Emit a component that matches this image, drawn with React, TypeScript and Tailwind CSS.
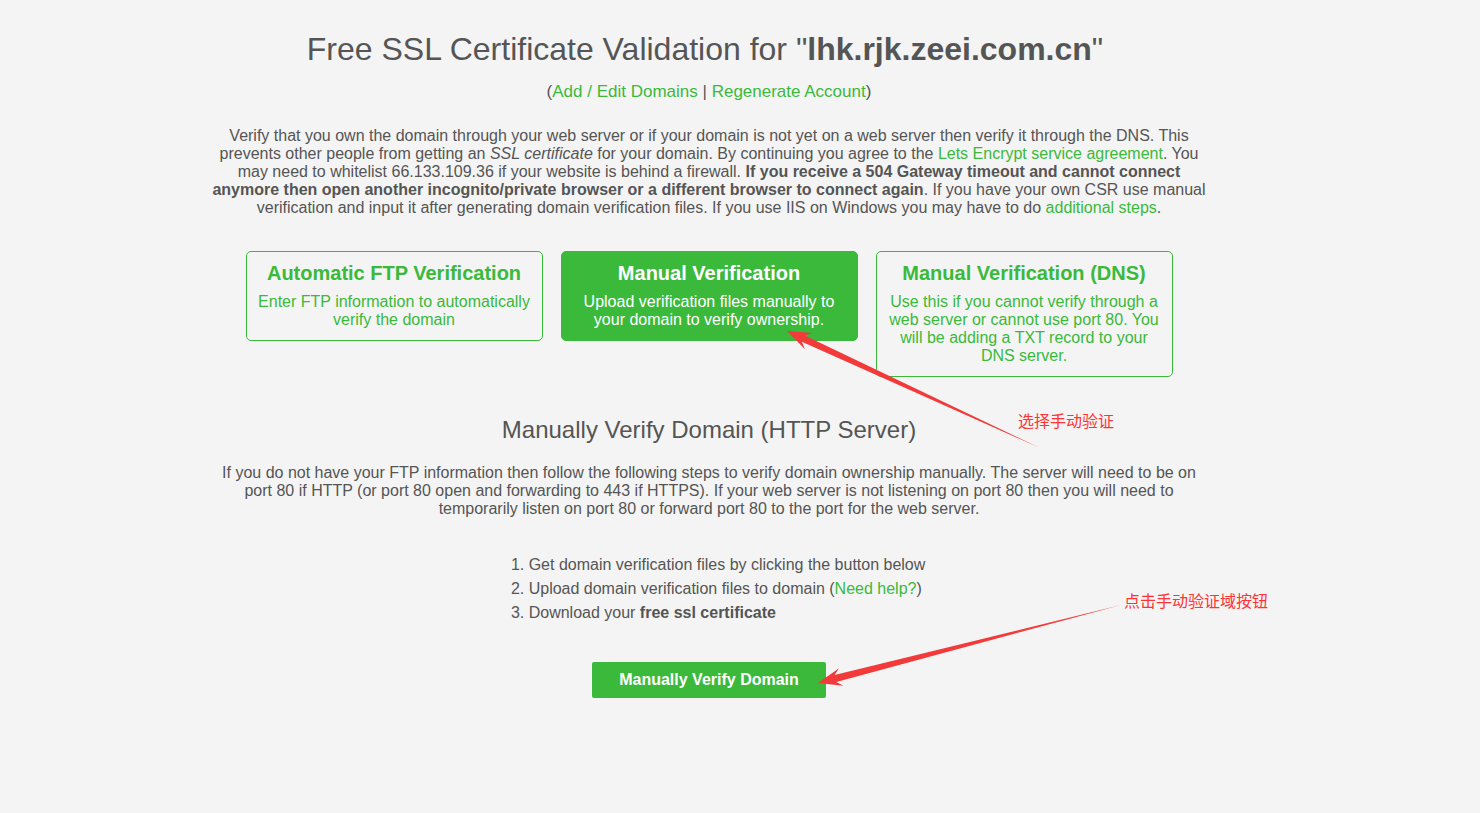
import React from 'react';

const GREEN = 'text-[#3bb93b]';

function Arrow({ tail, head, color = '#f23a3a' }: { tail: [number, number]; head: [number, number]; color?: string }) {
  const dx = head[0] - tail[0];
  const dy = head[1] - tail[1];
  const len = Math.hypot(dx, dy);
  const ux = dx / len;
  const uy = dy / len;
  const nx = -uy;
  const ny = ux;
  const headLen = 24;
  const headHalf = 9;
  const neckHalf = 3.5;
  const bx = head[0] - ux * headLen;
  const by = head[1] - uy * headLen;
  const nkx = head[0] - ux * (headLen - 6);
  const nky = head[1] - uy * (headLen - 6);
  const pts: [number, number][] = [
    [tail[0], tail[1]],
    [nkx + nx * neckHalf, nky + ny * neckHalf],
    [bx + nx * headHalf, by + ny * headHalf],
    [head[0], head[1]],
    [bx - nx * headHalf, by - ny * headHalf],
    [nkx - nx * neckHalf, nky - ny * neckHalf],
  ];
  return <polygon points={pts.map((p) => p.join(',')).join(' ')} fill={color} />;
}

export default function App() {
  return (
    <main className="relative min-h-[813px] bg-[#f4f4f4] font-['Liberation_Sans',Arial,sans-serif] text-[#555]">
      <div className="ml-[209px] w-[1000px] pt-[30px] text-center">
        <h1 className="pr-[8px] text-[32px] leading-[38px]">
          Free SSL Certificate Validation for "<b>lhk.rjk.zeei.com.cn</b>"
        </h1>
        <p className="mt-[14px] text-[17px] leading-[19px]">
          (<a className={GREEN}>Add / Edit Domains</a> | <a className={GREEN}>Regenerate Account</a>)
        </p>

        <p className="mt-[26px] text-[16px] leading-[18px]">
          Verify that you own the domain through your web server or if your domain is not yet on a web server then verify
          it through the DNS. This prevents other people from getting an <i>SSL certificate</i> for your domain. By
          continuing you agree to the <a className={GREEN}>Lets Encrypt service agreement</a>. You may need to whitelist
          66.133.109.36 if your website is behind a firewall.{' '}
          <b>If you receive a 504 Gateway timeout and cannot connect anymore then open another incognito/private browser or a different browser to connect again</b>.
          If you have your own CSR use manual verification and input it after generating domain verification files. If
          you use IIS on Windows you may have to do <a className={GREEN}>additional steps</a>.
        </p>

        <div className="mt-[34px] flex items-start justify-center gap-[18px]">
          <div className="w-[297px] rounded-[5px] border border-[#3bb93b] px-[10px] pt-[9px] pb-[11px] text-[#3bb93b]">
            <h3 className="text-[20px] font-bold leading-[24px]">Automatic FTP Verification</h3>
            <p className="mt-[8px] text-[16px] leading-[18px]">Enter FTP information to automatically verify the domain</p>
          </div>
          <div className="w-[297px] rounded-[5px] border border-[#3bb93b] bg-[#3bb93b] px-[10px] pt-[9px] pb-[11px] text-white">
            <h3 className="text-[20px] font-bold leading-[24px]">Manual Verification</h3>
            <p className="mt-[8px] text-[16px] leading-[18px]">Upload verification files manually to your domain to verify ownership.</p>
          </div>
          <div className="w-[297px] rounded-[5px] border border-[#3bb93b] px-[10px] pt-[9px] pb-[11px] text-[#3bb93b]">
            <h3 className="text-[20px] font-bold leading-[24px]">Manual Verification (DNS)</h3>
            <p className="mt-[8px] text-[16px] leading-[18px]">
              Use this if you cannot verify through a web server or cannot use port 80. You will be adding a TXT record to
              your DNS server.
            </p>
          </div>
        </div>

        <h2 className="mt-[39px] text-[24px] leading-[28px]">Manually Verify Domain (HTTP Server)</h2>

        <p className="mt-[20px] text-[16px] leading-[18px]">
          If you do not have your FTP information then follow the following steps to verify domain ownership manually.
          The server will need to be on port 80 if HTTP (or port 80 open and forwarding to 443 if HTTPS). If your web
          server is not listening on port 80 then you will need to temporarily listen on port 80 or forward port 80 to
          the port for the web server.
        </p>

        <ol className="mt-[35px] inline-block list-decimal pl-[36px] text-left text-[16px] leading-[24px]">
          <li>Get domain verification files by clicking the button below</li>
          <li>
            Upload domain verification files to domain (<a className={GREEN}>Need help?</a>)
          </li>
          <li>
            Download your <b>free ssl certificate</b>
          </li>
        </ol>

        <div className="mt-[37px]">
          <button className="h-[36px] w-[234px] rounded-[2px] bg-[#3bb93b] text-[16px] font-bold text-white">
            Manually Verify Domain
          </button>
        </div>
      </div>

      <svg className="pointer-events-none absolute left-0 top-0" width="1480" height="813">
        <Arrow tail={[1040, 448]} head={[787, 331]} />
        <Arrow tail={[1121, 605]} head={[818, 683]} />
      </svg>
      <span className="absolute left-[1018px] top-[410px] text-[16px] leading-[20px] text-[#ff3333] font-['Noto_Sans_CJK_SC',sans-serif]">
        选择手动验证
      </span>
      <span className="absolute left-[1124px] top-[590px] text-[16px] leading-[20px] text-[#ff3333] font-['Noto_Sans_CJK_SC',sans-serif]">
        点击手动验证域按钮
      </span>
    </main>
  );
}
